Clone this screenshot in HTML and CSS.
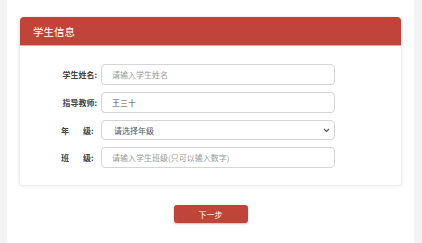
FILE: index.html
```html
<!DOCTYPE html>
<html lang="zh">
<head>
<meta charset="utf-8">
<link rel="stylesheet" href="styles.css">
</head>
<body>
<div class="page">
  <div class="card">
    <div class="card-head">学生信息</div>
    <div class="card-body">
      <div class="row">
        <label class="label">学生姓名:</label>
        <input class="field" type="text" placeholder="请输入学生姓名">
      </div>
      <div class="row">
        <label class="label">指导教师:</label>
        <input class="field" type="text" value="王三十">
      </div>
      <div class="row">
        <label class="label spaced">年<span class="gap"></span>级:</label>
        <div class="field select">
          <span>请选择年级</span>
          <svg width="7" height="5" viewBox="0 0 7 5"><path d="M1 1 L3.5 3.5 L6 1" fill="none" stroke="#555" stroke-width="1.2"/></svg>
        </div>
      </div>
      <div class="row">
        <label class="label spaced">班<span class="gap"></span>级:</label>
        <input class="field" type="text" placeholder="请输入学生班级(只可以输入数字)">
      </div>
    </div>
  </div>
  <div class="actions">
    <button class="btn">下一步</button>
  </div>
</div>
</body>
</html>
```

FILE: styles.css
```css
html, body {
  margin: 0;
  padding: 0;
  background: #f3f3f3;
  font-family: "Noto Sans CJK SC", "Noto Sans", sans-serif;
}
.page {
  margin: 0 8px 0 7px;
  height: 243px;
  background: #fff;
  padding-top: 17px;
  box-sizing: border-box;
}
.card {
  margin: 0 12px;
  border-radius: 4px;
  background: #fff;
  box-shadow: 0 0 3px rgba(0,0,0,0.12);
  border: 1px solid #eee;
  border-top: none;
}
.card-head {
  height: 29px;
  background: #c1443a;
  color: #fff;
  font-size: 10.5px;
  line-height: 29px;
  padding-left: 13px;
  border-radius: 4px 4px 0 0;
  border-bottom: 1px solid #e7a29b;
  box-sizing: border-box;
}
.card-body {
  padding: 18px 0 17px;
  display: flex;
  flex-direction: column;
  gap: 7px;
}
.row {
  display: flex;
  align-items: center;
  gap: 4px;
}
.label {
  width: 77px;
  text-align: right;
  font-size: 8px;
  font-weight: 700;
  color: #444;
  display: flex;
  justify-content: flex-end;
  padding-right: 0;
  box-sizing: border-box;
}
.label.spaced {
  justify-content: flex-start;
  padding-left: 41px;
}
.gap {
  display: inline-block;
  width: 14px;
}
.field {
  width: 234px;
  height: 21px;
  box-sizing: border-box;
  border: 1px solid #d4d4d4;
  border-radius: 4px;
  padding: 0 10px;
  font-family: inherit;
  font-size: 8px;
  color: #555;
  background: #fff;
  outline: none;
}
.field::placeholder {
  color: #999;
}
.select {
  display: flex;
  align-items: center;
  justify-content: space-between;
  color: #555;
  padding: 0 4px 0 12px;
  height: 20px;
}
.actions {
  display: flex;
  justify-content: center;
  padding-top: 19px;
}
.btn {
  width: 74px;
  height: 18px;
  border: none;
  border-radius: 3px;
  background: #c1443a;
  color: #fff;
  font-family: inherit;
  font-size: 8px;
  padding: 0;
  box-shadow: 0 1px 2px rgba(0,0,0,0.25);
}
```
